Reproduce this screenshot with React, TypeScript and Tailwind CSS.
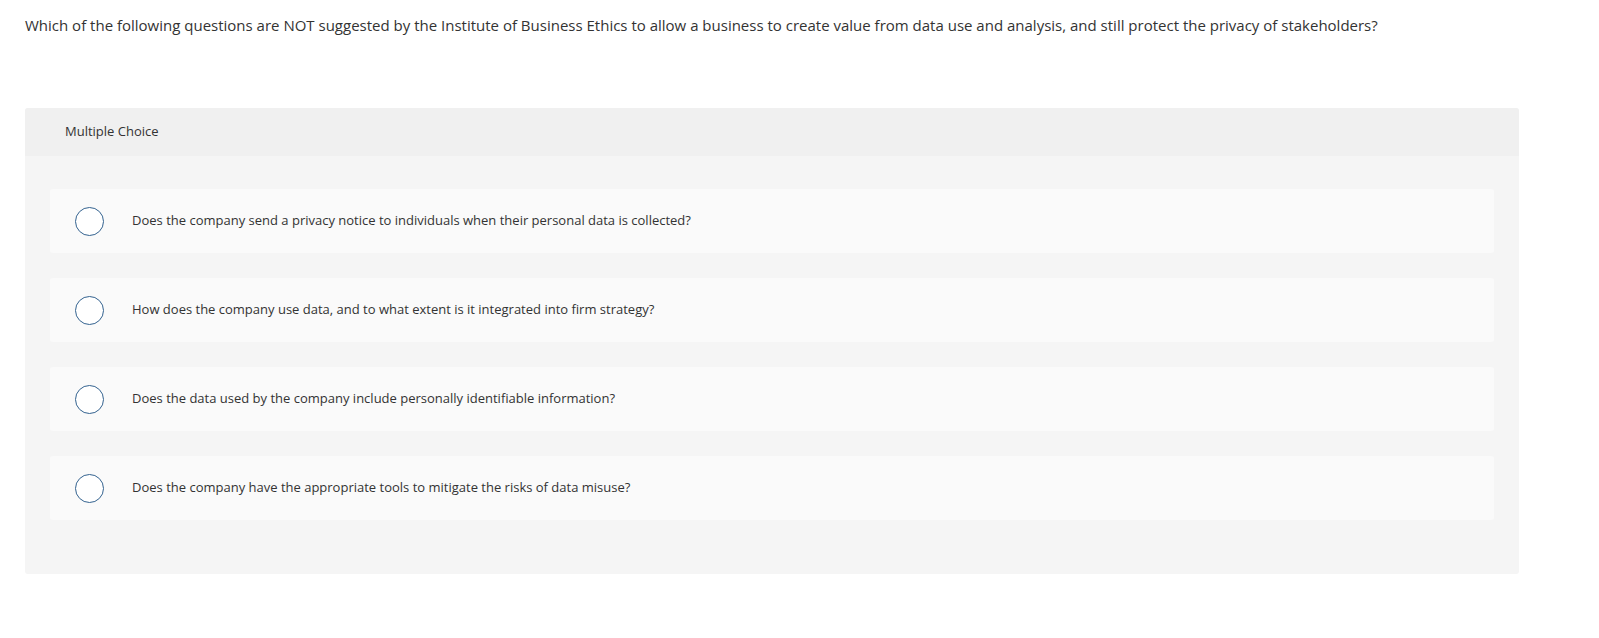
import React from "react";

const options = [
  "Does the company send a privacy notice to individuals when their personal data is collected?",
  "How does the company use data, and to what extent is it integrated into firm strategy?",
  "Does the data used by the company include personally identifiable information?",
  "Does the company have the appropriate tools to mitigate the risks of data misuse?",
];

function Radio() {
  return (
    <span className="block h-[29px] w-[29px] shrink-0 rounded-full border-[1.5px] border-[#33628f] bg-white" />
  );
}

export default function App() {
  return (
    <div className="min-h-[638px] bg-white text-[#333] font-['Open_Sans',sans-serif]">
      <div className="px-[25px] pt-[15px]">
        <p className="text-[15px] leading-[20px]">
          Which of the following questions are NOT suggested by the Institute of Business Ethics to allow a business to create value from data use and analysis, and still protect the privacy of stakeholders?
        </p>
      </div>
      <div className="mx-[25px] mt-[73px] w-[1494px] rounded-[3px] bg-[#f5f5f5]">
        <div className="flex h-[48px] items-center rounded-t-[3px] bg-[#f0f0f0] px-[40px] text-[13px]">
          Multiple Choice
        </div>
        <div className="flex flex-col gap-[25px] px-[25px] pt-[33px] pb-[54px]">
          {options.map((o) => (
            <div
              key={o}
              className="flex h-[64px] items-center rounded-[3px] bg-[#fafafa] pl-[25px]"
            >
              <Radio />
              <span className="ml-[28px] text-[13px]">{o}</span>
            </div>
          ))}
        </div>
      </div>
    </div>
  );
}
